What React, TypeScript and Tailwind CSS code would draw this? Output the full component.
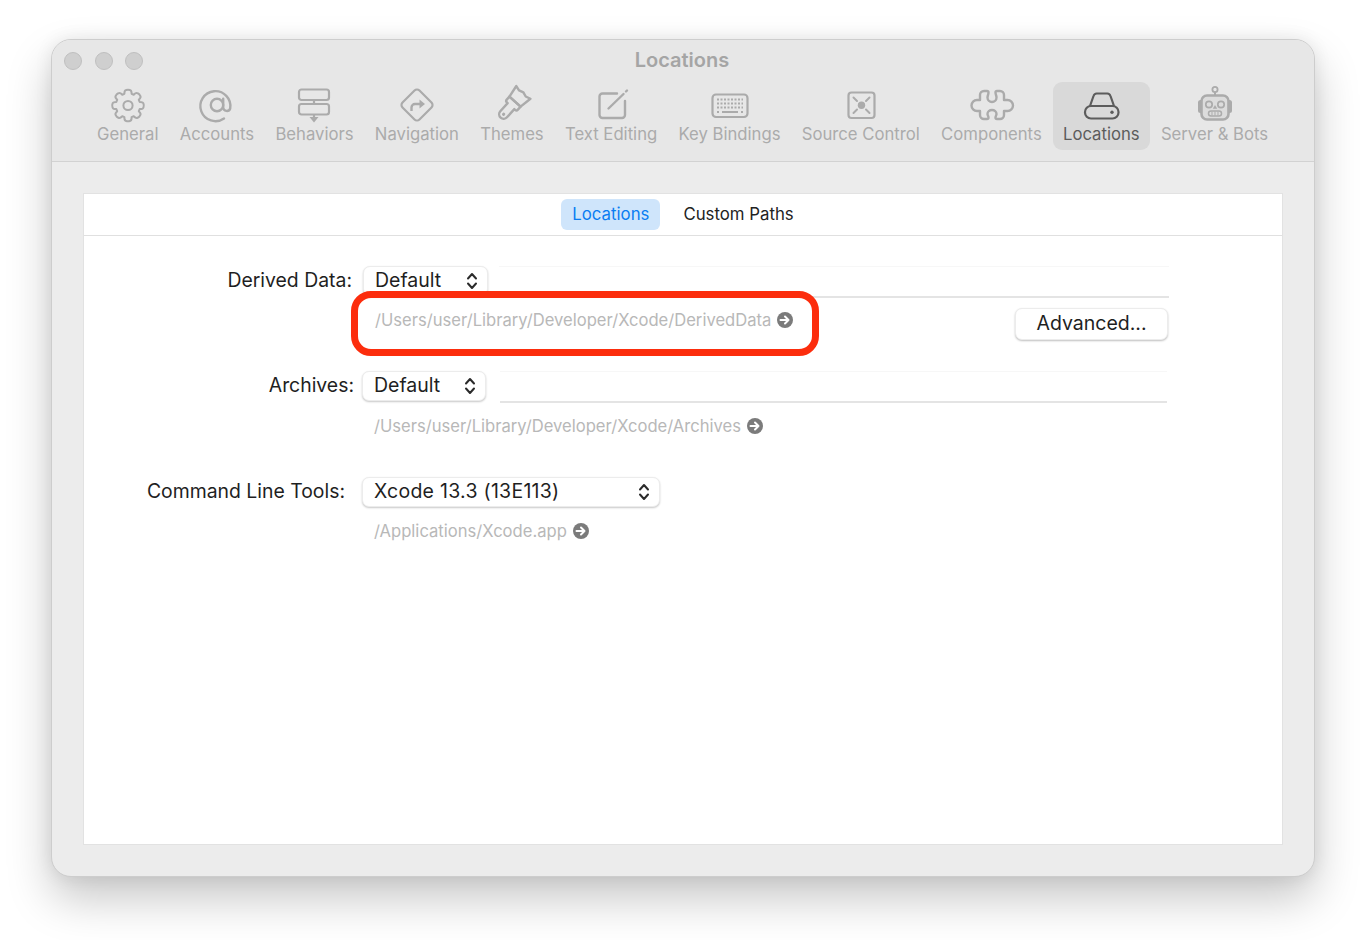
import { ReactNode } from "react";

const GearIcon = () => {
  // 8 tooth cog outline
  const pts: string[] = [];
  for (let i = 0; i < 8; i++) {
    const a = (i * Math.PI) / 4 - Math.PI / 2;
    const p = (r: number, d: number) =>
      `${(22 + r * Math.cos(a + d)).toFixed(2)} ${(20.5 + r * Math.sin(a + d)).toFixed(2)}`;
    pts.push(
      `${i === 0 ? "M" : "L"}${p(12.2, -0.3)} Q${p(15.6, -0.24)} ${p(15.6, -0.12)} Q${p(16.2, 0)} ${p(15.6, 0.12)} Q${p(15.6, 0.24)} ${p(12.2, 0.3)}`
    );
  }
  return (
    <>
      <path d={pts.join(" ") + " Z"} fill="none" stroke="currentColor" strokeWidth="2" strokeLinejoin="round" />
      <circle cx="22" cy="20.5" r="4.6" fill="none" stroke="currentColor" strokeWidth="2" />
    </>
  );
};

const icons: Record<string, ReactNode> = {
  General: <GearIcon />,
  Accounts: (
    <g fill="none" stroke="currentColor" strokeWidth="2.4" strokeLinecap="round">
      <circle cx="22" cy="20" r="6.2" />
      <path d="M28.2 13.8V22.5a3.6 3.6 0 0 0 7 1A15 15 0 1 0 29 33.4" />
    </g>
  ),
  Behaviors: (
    <g fill="none" stroke="currentColor" strokeWidth="2.2">
      <rect x="7" y="4.5" width="30" height="10.5" rx="2.5" />
      <rect x="7" y="19" width="30" height="10.5" rx="2.5" />
      <path d="M22 15v4M22 29.5v4" />
      <path d="M17.5 32h9L22 37.5z" fill="currentColor" stroke="none" />
    </g>
  ),
  Navigation: (
    <g fill="none" stroke="currentColor" strokeWidth="2.2">
      <rect x="10" y="8" width="24" height="24" rx="3.5" transform="rotate(45 22 20)" />
      <path d="M16.5 26v-3.500a3.500 3.500 0 0 1 3.500-3.500h5" strokeWidth="2.400" />
      <path d="M24.500 14.500L30 19l-5.500 4.500z" fill="currentColor" stroke="none" />
    </g>
  ),
  Themes: (
    <g transform="rotate(42 22 20)" fill="none" stroke="currentColor" strokeWidth="2.4" strokeLinejoin="round">
      <path d="M12.500 3l5 1.500 4.500-1.500 4.500 1.500 5-1.500-2 12.500H14.500z" />
      <path d="M14.500 15.500h15v4a2 2 0 0 1-2 2h-1v11a4 4 0 0 1-9 0v-11h-1a2 2 0 0 1-2-2z" />
      <circle cx="22" cy="32.500" r="1.600" fill="currentColor" stroke="none" />
    </g>
  ),
  "Text Editing": (
    <g fill="none" stroke="currentColor" strokeWidth="2.400" strokeLinecap="round">
      <path d="M28 8.500H13.500a3 3 0 0 0-3 3V30a3 3 0 0 0 3 3H33a3 3 0 0 0 3-3V16" />
      <path d="M19.500 23.500L34.500 9" />
      <path d="M37 6.500l1-1" />
    </g>
  ),
  "Key Bindings": (
    <g>
      <rect x="5.500" y="9.500" width="35" height="22.500" rx="3.500" fill="none" stroke="currentColor" strokeWidth="2.200" />
      <path
        d="M10 14.500h26M10 18.500h26M10 22.500h26"
        stroke="currentColor"
        strokeWidth="2"
        strokeDasharray="2 1.500"
        fill="none"
      />
      <path d="M15 27h16" stroke="currentColor" strokeWidth="2.200" fill="none" />
      <path d="M10 27h2M34 27h2" stroke="currentColor" strokeWidth="2" fill="none" />
    </g>
  ),
  "Source Control": (
    <g fill="none" stroke="currentColor">
      <rect x="9.500" y="7.500" width="26" height="25.500" rx="3" strokeWidth="2.200" />
      <circle cx="22.500" cy="20.300" r="3.700" fill="currentColor" stroke="none" />
      <path d="M14.500 12.500l3.500 3.500M30.500 12.500l-3.500 3.500M14.500 28l3.500-3.500M30.500 28l-3.500-3.500" strokeWidth="2" strokeLinecap="round" />
    </g>
  ),
  Components: (
    <path
      d="M11 15V10a4 4 0 0 1 4-4h3a1.500 1.500 0 0 1 1.500 1.500c0 2-1 3-1 5a4.500 4.500 0 0 0 9 0c0-2-1-3-1-5A1.500 1.500 0 0 1 28 6h3a4 4 0 0 1 4 4v5h3.500a5.500 5.500 0 0 1 0 11H35v4a4 4 0 0 1-4 4h-3a1.500 1.500 0 0 1-1.500-1.500c0-1.500 1-2 1-3.500a4.500 4 0 0 0-9 0c0 1.500 1 2 1 3.500A1.500 1.500 0 0 1 18 34h-3a4 4 0 0 1-4-4v-4H8a5.500 5.500 0 0 1 0-11z"
      fill="none"
      stroke="currentColor"
      strokeWidth="2.400"
      strokeLinejoin="round"
    />
  ),
  Locations: (
    <g fill="none" stroke="currentColor" strokeWidth="2.200">
      <path d="M11 21l3.500-10a3.500 3.500 0 0 1 3.200-2.500h10.600a3.500 3.500 0 0 1 3.200 2.500l3.500 10" />
      <rect x="6" y="21" width="33.500" height="12.500" rx="6" />
      <circle cx="33" cy="27.200" r="1.700" fill="currentColor" stroke="none" />
    </g>
  ),
  "Server & Bots": (
    <g>
      <circle cx="22" cy="4.500" r="2.600" fill="none" stroke="currentColor" strokeWidth="1.800" />
      <path d="M22 7v3" stroke="currentColor" strokeWidth="2" />
      <rect x="5" y="15" width="34" height="13" rx="2.500" fill="currentColor" />
      <rect x="8.500" y="10.500" width="27" height="24" rx="5.500" fill="#dcdcdc" stroke="currentColor" strokeWidth="2.600" />
      <circle cx="16" cy="19.500" r="3.200" fill="none" stroke="currentColor" strokeWidth="1.700" />
      <circle cx="28" cy="19.500" r="3.200" fill="none" stroke="currentColor" strokeWidth="1.700" />
      <path d="M22 20l2.200 3.800h-4.400z" fill="currentColor" />
      <rect x="15.500" y="26" width="13" height="5" rx="2.500" fill="none" stroke="currentColor" strokeWidth="1.500" />
      <path d="M19 26.500v4M22 26.500v4M25 26.500v4" stroke="currentColor" strokeWidth="1" />
    </g>
  ),
};

const tools = [
  "General",
  "Accounts",
  "Behaviors",
  "Navigation",
  "Themes",
  "Text Editing",
  "Key Bindings",
  "Source Control",
  "Components",
  "Locations",
  "Server & Bots",
];

const Chevrons = () => (
  <svg width="12" height="18" viewBox="0 0 12 18" fill="none" stroke="#2b2b2b" strokeWidth="2" strokeLinecap="round" strokeLinejoin="round">
    <path d="M2 6.500L6 2l4 4.500M2 11.500L6 16l4-4.500" />
  </svg>
);

const GoArrow = () => (
  <svg width="16" height="16" viewBox="0 0 16 16" className="shrink-0">
    <circle cx="8" cy="8" r="8" fill="#7b7b7b" />
    <path d="M3.500 8h8M8 4.500L11.500 8L8 11.500" fill="none" stroke="#fff" strokeWidth="2" strokeLinecap="round" strokeLinejoin="round" />
  </svg>
);

const Select = ({ value, className }: { value: string; className: string }) => (
  <div
    className={`flex h-[30px] shrink-0 items-center justify-between rounded-[7px] border border-[#ececec] bg-white pl-[11px] pr-[9px] text-[19.5px] text-[#1f1f1f] shadow-[0_1px_2px_rgba(0,0,0,0.22)] ${className}`}
  >
    <span>{value}</span>
    <Chevrons />
  </div>
);

const PathLine = ({ path, className }: { path: string; className: string }) => (
  <div className={`flex h-[22px] items-center gap-[6px] text-[16.6px] whitespace-nowrap text-[#b8b8b8] ${className}`}>
    <span>{path}</span>
    <GoArrow />
  </div>
);

export default function App() {
  return (
    <div className="h-[940px] w-[1366px] overflow-hidden bg-white pl-[51px] pt-[39px] font-['Inter',sans-serif]">
      <div className="flex h-[838px] w-[1264px] flex-col overflow-hidden rounded-[20px] border border-[#cdcdcd] bg-[#ececec] shadow-[0_22px_45px_rgba(0,0,0,0.22),0_0_18px_rgba(0,0,0,0.08)]">
        <header className="h-[122px] shrink-0 border-b border-[#d2d2d2] bg-[#e7e7e7]">
          <div className="relative flex h-[42px] items-center justify-center pb-[2px] pr-[2px]">
            <div className="absolute left-[12px] top-[12px] flex gap-[12.500px]">
              <span className="h-[18px] w-[18px] rounded-full border border-[#bfbfbf] bg-[#cfcfcf]" />
              <span className="h-[18px] w-[18px] rounded-full border border-[#bfbfbf] bg-[#cfcfcf]" />
              <span className="h-[18px] w-[18px] rounded-full border border-[#bfbfbf] bg-[#cfcfcf]" />
            </div>
            <span className="text-[20px] font-semibold text-[#a5a5a5]">Locations</span>
          </div>
          <nav className="flex gap-[1.25px] pl-[35px]">
            {tools.map((tool) => {
              const active = tool === "Locations";
              return (
                <div
                  key={tool}
                  className={`flex h-[68px] shrink-0 flex-col items-center rounded-[9px] px-[10px] pt-[3px] ${
                    active ? "bg-[#d9d9d9] text-[#5c5c5c]" : "text-[#ababab]"
                  }`}
                >
                  <svg width="44" height="40" viewBox="0 0 44 40" className="mb-[-1px] overflow-visible">
                    {icons[tool]}
                  </svg>
                  <span className="text-[16.7px] leading-[20px] whitespace-nowrap">{tool}</span>
                </div>
              );
            })}
          </nav>
        </header>

        <main className="px-[31px] pt-[31px]">
          <section className="relative h-[652px] border border-[#e2e2e2] bg-white">
            <div className="flex h-[42px] items-center justify-center gap-[12px] border-b border-[#e0e0e0] text-[16.8px]">
              <span className="rounded-[6px] bg-[#cfe5fb] px-[11px] py-[3px] text-[#0a7df2]">Locations</span>
              <span className="px-[11px] py-[3px] text-[#222]">Custom Paths</span>
            </div>

            <div className="flex pt-[30px] text-[19.4px] text-[#1f1f1f]">
              <div className="flex h-[30px] w-[268px] items-center justify-end">Derived Data:</div>
              <Select value="Default" className="ml-[11px] w-[125px]" />
              <div className="ml-[11px] h-[32px] w-[670px] border-b-2 border-t border-b-[#e4e4e4] border-t-[#f7f7f7]" />
            </div>
            <div className="mt-[10px] flex items-start justify-between pr-[114px]">
              <PathLine path="/Users/user/Library/Developer/Xcode/DerivedData" className="ml-[291px] mt-[1px]" />
              <button className="h-[32px] w-[153px] rounded-[7px] border border-[#ececec] bg-white text-[19.500px] text-[#1f1f1f] shadow-[0_1px_2px_rgba(0,0,0,0.25)]">
                Advanced...
              </button>
            </div>

            <div className="mt-[31px] flex text-[19.4px] text-[#1f1f1f]">
              <div className="flex h-[30px] w-[270px] items-center justify-end">Archives:</div>
              <Select value="Default" className="ml-[8px] w-[124px]" />
              <div className="ml-[14px] h-[32px] w-[667px] border-b-2 border-t border-b-[#e4e4e4] border-t-[#f7f7f7]" />
            </div>
            <PathLine path="/Users/user/Library/Developer/Xcode/Archives" className="ml-[290px] mt-[12px]" />

            <div className="mt-[40px] flex text-[19.4px] text-[#1f1f1f]">
              <div className="flex h-[30px] w-[261px] items-center justify-end whitespace-nowrap">Command Line Tools:</div>
              <Select value="Xcode 13.3 (13E113)" className="ml-[17px] w-[298px] tracking-[0.27px]" />
            </div>
            <PathLine path="/Applications/Xcode.app" className="ml-[290px] mt-[13px]" />

            {/* red annotation over the first path */}
            <div className="absolute left-[267px] top-[97px] h-[65px] w-[468px] rounded-[20px] border-[7px] border-[#fc2d0d]" />
          </section>
        </main>
      </div>
    </div>
  );
}
